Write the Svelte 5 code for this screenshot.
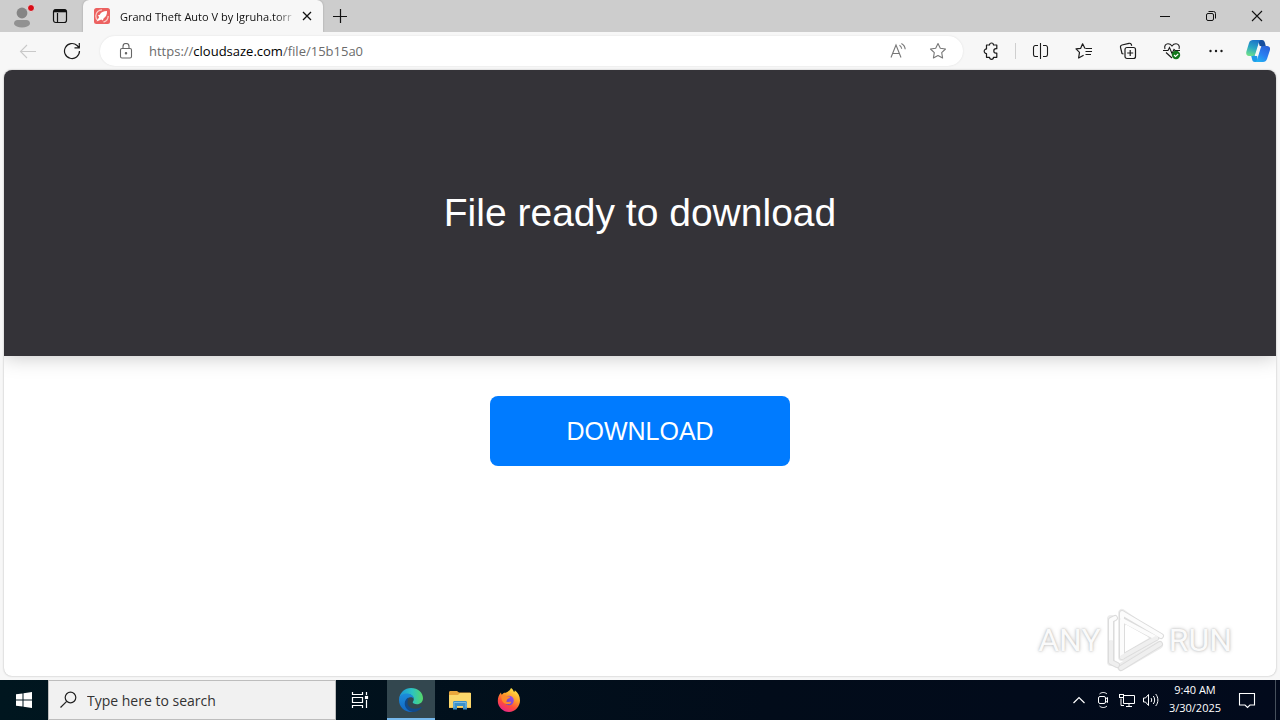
<script>
  const title = 'Grand Theft Auto V by Igruha.torr';
  let query = $state('');
</script>

<div class="screen">
  <div class="tabbar">
    <button class="corner first" aria-label="Profile">
      <svg width="30" height="28" viewBox="0 0 30 28">
        <circle cx="15" cy="11" r="5.4" fill="#858585" />
        <path d="M7 22c0-3 1.5-4 3.500-4h9c2 0 3.500 1 3.500 4-1 2-4 3.500-8 3.500s-7-1.500-8-3.500z" fill="#929292" />
        <circle cx="24" cy="6" r="3.500" fill="#d90c16" stroke="#dedede" />
      </svg>
    </button>
    <button class="corner" aria-label="Tab actions">
      <svg width="16" height="16" viewBox="0 0 16 16" fill="none" stroke="#111" stroke-width="1.200">
        <rect x="1.500" y="1.500" width="13" height="13" rx="2.200" />
        <path d="M5.500 5v9" /><path d="M2 3h12" stroke-width="2.600" />
      </svg>
    </button>
    <div class="tab">
      <svg class="fav" width="16" height="16" viewBox="0 0 16 16">
        <rect width="16" height="16" rx="2.500" fill="#ec6160" />
        <path d="M8 1.800A6.200 6.200 0 0 0 1.800 8c0 1.800.7 3.400 1.900 4.500M9.500 14A6.200 6.200 0 0 0 14.200 8" fill="none" stroke="#f9cdc9" stroke-width="1.300" />
        <path d="M13 3c-3.700 0-6 1.200-7.200 3.800l-2 .6 1.400 1.600-2.600 4.400 4.700-2 1.500 1.200.9-2.400c2.300-1.400 3.400-3.500 3.300-7.200z" fill="#fff" />
      </svg>
      <span class="title">{title}</span>
      <button class="close" aria-label="Close tab">
        <svg width="10" height="10" viewBox="0 0 10 10"><path d="M1 1l8 8M9 1l-8 8" stroke="#111" stroke-width="1.300" /></svg>
      </button>
    </div>
    <button class="plus" aria-label="New tab">
      <svg width="14" height="14" viewBox="0 0 14 14"><path d="M7.500 0v14M0 7.500h14" stroke="#111" stroke-width="1.200" /></svg>
    </button>
    <div class="spacer"></div>
    <button class="win" aria-label="Minimize">
      <svg width="10" height="10" viewBox="0 0 10 10"><path d="M0 5.500h10" stroke="#111" /></svg>
    </button>
    <button class="win" aria-label="Restore">
      <svg width="12" height="12" viewBox="0 0 12 12" fill="none" stroke="#111">
        <rect x="1.500" y="3.500" width="7" height="7" rx="1.500" /><path d="M3.500 1.500h5a2 2 0 0 1 2 2v5" />
      </svg>
    </button>
    <button class="win" aria-label="Close">
      <svg width="12" height="12" viewBox="0 0 12 12"><path d="M1 1l10 10M11 1l-10 10" stroke="#111" stroke-width="1.100" /></svg>
    </button>
  </div>

  <div class="toolbar">
    <button class="tool" aria-label="Back">
      <svg width="18" height="16" viewBox="0 0 18 16" fill="none" stroke="#c9c9c9" stroke-width="1.100"><path d="M17 8.500H2M8 2L1.500 8.500 8 15" /></svg>
    </button>
    <button class="tool" aria-label="Refresh">
      <svg width="18" height="18" viewBox="0 0 18 18" fill="none" stroke="#1b1b1b" stroke-width="1.200"><path d="M16.500 9a7.500 7.500 0 1 1-2.400-5.500L16 5.500M16.300 1v4.800h-4.800" /></svg>
    </button>
    <div class="address">
      <svg class="lock" width="14" height="16" viewBox="0 0 14 16" fill="none" stroke="#666" stroke-width="1.100">
        <rect x="1.500" y="5.500" width="11" height="9.500" rx="1.500" /><path d="M4 5.500V3.500a3 3 0 0 1 6 0v2" /><circle cx="7" cy="10.300" r=".7" fill="#666" />
      </svg>
      <a class="url" href="https://cloudsaze.com/file/15b15a0">https://<b>cloudsaze.com</b>/file/15b15a0</a>
      <button class="inner" aria-label="Read aloud">
        <svg width="18" height="18" viewBox="0 0 18 18" fill="none" stroke="#777" stroke-width="1.100">
          <path d="M2 15.500L7 3l5 12.500M3.800 11.500h6.400M10.500 3.300c1.300.8 2 2 2.200 3.500M12.400 1.500c2.300 1.200 3.600 3.200 3.800 5.800" />
        </svg>
      </button>
      <button class="inner" aria-label="Add to favorites">
        <svg width="18" height="18" viewBox="0 0 18 18" fill="none" stroke="#777" stroke-width="1.100" stroke-linejoin="round">
          <path d="M9 1.500l2.300 4.800 5.200.7-3.800 3.700.9 5.300L9 13.500 4.400 16l.9-5.300L1.500 7l5.200-.7z" />
        </svg>
      </button>
    </div>
    <button class="tool" aria-label="Extensions">
      <svg width="18" height="18" viewBox="0 0 18 18" fill="none" stroke="#1b1b1b" stroke-width="1.200" stroke-linejoin="round">
        <path d="M4.500 3h3a2 2 0 0 1 4 0h3.300v3.700h-.8a2.200 2.200 0 0 0 0 4.400h.8v4.200h-3.300a2 2 0 0 1-4 0h-3v-3.800a2.300 2.300 0 1 1 0-4.600z" />
      </svg>
    </button>
    <i class="rule"></i>
    <button class="tool" aria-label="Split screen">
      <svg width="17" height="16" viewBox="0 0 17 16" fill="none" stroke="#1b1b1b" stroke-width="1.100"><path d="M6 2.500H3a2 2 0 0 0-1.500 2v7a2 2 0 0 0 1.500 2h3M11 2.500h3a2 2 0 0 1 1.500 2v7a2 2 0 0 1-1.500 2h-3M8.500 0v16" /></svg>
    </button>
    <button class="tool" aria-label="Favorites">
      <svg width="18" height="18" viewBox="0 0 18 18" fill="none" stroke="#1b1b1b" stroke-width="1.200" stroke-linejoin="round"><path d="M10.500 6.500H17M10 6.500L7.600 1.800 5.700 6.300l-4.700.6 3.500 3.500-.9 5.600 5-2.800M10.500 9.500H17M10.500 12.500H16" /></svg>
    </button>
    <button class="tool" aria-label="Collections">
      <svg width="18" height="18" viewBox="0 0 18 18" fill="none" stroke="#1b1b1b" stroke-width="1.200"><rect x="6" y="5.500" width="10.500" height="11" rx="2" /><path d="M11.200 8v6M8.200 11h6M4.500 12L3 11.500 1.500 5.400A2 2 0 0 1 3 3l7-1.700a2 2 0 0 1 2.400 1.500l.3.900" /></svg>
    </button>
    <button class="tool" aria-label="Browser essentials">
      <svg width="18" height="18" viewBox="0 0 18 18" fill="none" stroke="#1b1b1b" stroke-width="1.100">
        <path d="M2 7C.8 3.500 3 1.800 5 1.800c1.600 0 3 .8 4 2.200 1-1.400 2.400-2.200 4-2.200 2 0 4.200 1.700 3 5.200M0 8.500h5l1.500-3 2.500 6 2-4 1 1h5M3 10.500l6 5.500" />
        <circle cx="13" cy="13" r="4.200" fill="#12771c" stroke="none" /><path d="M11 13l1.500 1.500L15.200 12" stroke="#fff" />
      </svg>
    </button>
    <button class="tool" aria-label="Settings and more">
      <svg width="16" height="16" viewBox="0 0 16 16" fill="#1b1b1b"><circle cx="2.500" cy="8" r="1.200" /><circle cx="8" cy="8" r="1.200" /><circle cx="13.500" cy="8" r="1.200" /></svg>
    </button>
    <button class="tool copilot" aria-label="Copilot">
      <svg width="24" height="24" viewBox="0 0 24 24">
        <defs>
          <linearGradient id="cpA" x1=".6" y1="0" x2=".3" y2="1"><stop offset="0" stop-color="#1b74c8" /><stop offset=".5" stop-color="#2aa7c4" /><stop offset="1" stop-color="#6ee08a" /></linearGradient>
          <linearGradient id="cpB" x1=".8" y1="0" x2=".2" y2="1"><stop offset="0" stop-color="#2a62d8" /><stop offset=".5" stop-color="#2b7df0" /><stop offset="1" stop-color="#22b4f2" /></linearGradient>
        </defs>
        <path d="M12 1h4c2 0 2.500 1.500 3 3l1 4h-6z" fill="#174f9e" />
        <path d="M12 23H9c-2 0-2.600-1.200-3-3l-1-4h6z" fill="#1e9be8" />
        <path d="M7 1h8c-1.500.5-2 2-2.600 4L9.500 14.500C9 16.300 8 17 6.500 17H3C.5 17-.2 15 .4 12.500L3 4c.8-2.200 2-3 4-3z" fill="url(#cpA)" />
        <path d="M17 23H9c1.500-.5 2-2 2.600-4l2.900-9.500C15 7.700 16 7 17.500 7H21c2.700 0 3.500 2 2.800 4.500L21 20c-.7 2-2 3-4 3z" fill="url(#cpB)" />
        <path d="M12.500 7h3.300c-1 .5-1.500 1.400-1.900 2.700L12 16c-.3.700-.7 1-1.300 1H8.300c.9-.6 1.300-1.400 1.700-2.700z" fill="#f7f7f7" />
      </svg>
    </button>
  </div>

  <main class="page">
    <header class="hero"><h1>File ready to download</h1></header>
    <button class="download">DOWNLOAD</button>
    <div class="watermark">
      <span>ANY</span>
      <svg width="60" height="64" viewBox="0 0 60 64" fill="none" stroke-linejoin="round" stroke-linecap="round">
        <g stroke="#ececec" stroke-width="8"><path d="M17 5v44l34-20zM6 11v43M16 59l38-22" /></g>
        <g stroke="#dcdcdc" stroke-width="6"><path d="M17 13v36l34-19L17 11M10 10l-4 2v42l6 3M17 10V5l39 23M16 60l39-24" /></g>
        <g stroke="#fcfcfc" stroke-width="4"><path d="M17 49V12l34 18M10 10l-4 2v20M17 10V5l39 23" /></g>
        <path d="M17 49l34-19M6 34v20l6 3M16 60l39-24" stroke="#efefef" stroke-width="4" />
        <path d="M20 17v27l24-14z" fill="#fff" stroke="none" />
      </svg>
      <span>RUN</span>
    </div>
  </main>

  <footer class="taskbar">
    <button class="app" aria-label="Start">
      <svg width="16" height="16" viewBox="0 0 16 16" fill="#fff"><path d="M0 2.300L6.500 1.400v6.100H0zM7.500 1.200L16 0v7.500H7.500zM0 8.500h6.500v6.100L0 13.700zM7.500 8.500H16V16l-8.500-1.200z" /></svg>
    </button>
    <label class="search">
      <svg width="18" height="18" viewBox="0 0 18 18" fill="none" stroke="#222" stroke-width="1.200"><circle cx="10.500" cy="6.500" r="5.300" /><path d="M6.700 10.300L.5 16.500" /></svg>
      <input type="text" placeholder="Type here to search" aria-label="Search" bind:value={query} />
    </label>
    <button class="app view" aria-label="Task view">
      <svg width="18" height="16" viewBox="0 0 18 16" fill="none" stroke="#fff" stroke-width="1.200"><path d="M1.500 0v2.500h10V0M1.500 16v-2.500h10V16M1.500 5.500h10v5h-10zM15.500 0v3M15.500 8v8" /><rect x="14.500" y="4.500" width="2" height="2" fill="#fff" /></svg>
    </button>
    <button class="app active" aria-label="Microsoft Edge">
      <svg width="24" height="24" viewBox="0 0 24 24">
        <defs>
          <linearGradient id="edA" x1="0" y1=".4" x2="1" y2=".4"><stop offset="0" stop-color="#1a93d9" /><stop offset=".55" stop-color="#2cc3c2" /><stop offset="1" stop-color="#55d868" /></linearGradient>
          <linearGradient id="edB" x1="0" y1="0" x2="0" y2="1"><stop offset="0" stop-color="#1c8ddb" /><stop offset="1" stop-color="#1267c4" /></linearGradient>
        </defs>
        <path d="M0 11C.8 4.500 5.800 0 12 0c7 0 12 4.800 12 10.200 0 3.700-2.800 6-6 6-2.600 0-4.300-.8-4.300-1.900 0-.8 1.100-1.200 1.100-3.300C14.800 8 11.500 6 8 6 4 6 1 8.500 0 11z" fill="url(#edA)" />
        <path d="M0 12c0-4 3.500-6.500 7.700-6.500 4 0 7.100 2.300 7.100 5.500-.5-1.100-1.600-1.700-3-1.700-2.300 0-4.300 2-4.300 5.200 0 4.300 3.500 7.800 8 8.600-1.100.6-2.300.9-3.500.9C5.300 24 0 18.800 0 12z" fill="url(#edB)" />
        <path d="M9 12c-2 5 2 8.800 7 8.800 2.400 0 4.400-.8 5.800-1.700.6-.3.900.1.600.6C20.500 22.300 17.500 24 14 23.900c-5-.5-8.300-4.400-8.300-8.400 0-3 1.700-5.300 4.200-6.300-.8.700-1 1.700-.9 2.800z" fill="#114a8b" />
      </svg>
    </button>
    <button class="app" aria-label="File Explorer">
      <svg width="22" height="20" viewBox="0 0 22 20">
        <path d="M0 2.500C0 1.700.5 1 1.500 1H8l2 1.500h10.500c1 0 1.500.5 1.500 1.500V18H0z" fill="#e9a63c" /><path d="M0 5h9l2-2h11v14.500H0z" fill="#fbd76b" />
        <path d="M4 19.500v-7c0-1 .7-1.500 1.500-1.500h11c.8 0 1.500.5 1.500 1.500v7h-4V16H8v3.500z" fill="#3c91c9" /><path d="M5 17.500v-5h12v5" fill="none" stroke="#7dbbe0" />
      </svg>
    </button>
    <button class="app gap" aria-label="Firefox">
      <svg width="24" height="24" viewBox="0 0 24 24">
        <defs>
          <linearGradient id="ffA" x1=".8" y1="0" x2=".3" y2="1"><stop offset="0" stop-color="#fff04a" /><stop offset=".4" stop-color="#ff9f2a" /><stop offset=".7" stop-color="#ff4b3c" /><stop offset="1" stop-color="#e8248b" /></linearGradient>
          <linearGradient id="ffB" x1="1" y1="0" x2="0" y2="1"><stop offset="0" stop-color="#a34ee8" /><stop offset="1" stop-color="#5a46c4" /></linearGradient>
        </defs>
        <path d="M14 0c1.500 1 2.500 2.500 3 4 .6-.3.800-1 .8-1.700C21 4.500 23 8 23 12.500 23 18.500 18 24 12 24S.800 19 .8 13C.8 9.500 2 6.500 4 4.500c0 1 .3 1.700.8 2.300 1-1.700 2.500-2.300 4-2.100C10 4.500 12.500 3 14 0z" fill="url(#ffA)" />
        <circle cx="12" cy="12.500" r="4.800" fill="url(#ffB)" />
        <path d="M4.500 8c2-1.200 4-.8 5.600.2 1.500 0 2.900.2 2.900 1.100 0 1-1.800 1.300-2.700 1.900-.5.400 0 1.400-1.300 2.100 1.500 1.500 4 .2 5.300.6-.7 2.300-4 3.300-7 1.400C5 13.800 4 11 4.500 8z" fill="#ff8b2a" />
      </svg>
    </button>
    <div class="spacer"></div>
    <button class="tray" aria-label="Show hidden icons">
      <svg width="12" height="8" viewBox="0 0 12 8"><path d="M.5 7L6 1.500 11.500 7" fill="none" stroke="#fff" stroke-width="1.200" /></svg>
    </button>
    <button class="tray" aria-label="Meet Now">
      <svg width="14" height="18" viewBox="0 0 14 18" fill="none" stroke="#fff"><rect x="2.500" y="5.500" width="7" height="7" rx="1.500" /><path d="M9.500 8l2-1.500v5l-2-1.500M3.500 3c2-2 5.500-2 7.500 0M3.500 15c2 2 5.500 2 7.500 0" /></svg>
    </button>
    <button class="tray" aria-label="Network">
      <svg width="18" height="14" viewBox="0 0 18 14" fill="none" stroke="#fff"><path d="M5.500 2.500h11v8h-11zM8 13.500h6M11 10.500v3M3 5.500v7h3" /><rect x="1.500" y="1.500" width="4" height="3" fill="#020c1a" /></svg>
    </button>
    <button class="tray" aria-label="Volume">
      <svg width="18" height="14" viewBox="0 0 18 14" fill="none" stroke="#fff"><path d="M1.500 5h2l3-3.500v11L3.500 9h-2zM9 5c.9 1.200.9 2.800 0 4M11.300 3c1.800 2.300 1.800 5.700 0 8M13.700 1c2.900 3.500 2.900 8.500 0 12" /></svg>
    </button>
    <div class="clock"><span>9:40 AM</span><span>3/30/2025</span></div>
    <button class="tray note" aria-label="Notifications">
      <svg width="18" height="18" viewBox="0 0 18 18"><path d="M1.500 2.500h15v11.500H12L9.500 16.500 7 14H1.500z" fill="none" stroke="#fff" stroke-width="1.100" /></svg>
    </button>
    <i class="desk"></i>
  </footer>
</div>

<style>
  :global(body) { margin: 0; }
  .screen { display: flex; flex-direction: column; min-height: 100vh; background: #f7f7f7; font-family: "Open Sans", "Noto Sans", sans-serif; font-size: 11px; color: #111; }
  button { display: flex; align-items: center; justify-content: center; flex: none; padding: 0; border: 0; background: none; font: inherit; color: inherit; }
  svg { display: block; flex: none; }
  .spacer { flex: 1; }

  .tabbar { display: flex; height: 32px; background: #cdcdcd; }
  .corner { width: 38px; }
  .first { margin-left: 3px; }
  .tab { display: flex; align-items: center; width: 240px; margin-left: 4px; box-sizing: border-box; padding: 0 10px 0 11px; background: #f7f7f7; border-radius: 6px 6px 0 0; box-shadow: 0 0 2px #999; clip-path: inset(0 -3px); }
  .title { flex: 1; min-width: 0; margin-left: 10px; overflow: hidden; white-space: nowrap; mask-image: linear-gradient(to right, #000 88%, transparent); }
  .close { width: 12px; margin-left: 4px; }
  .plus { width: 34px; }
  .win { width: 46px; }

  .toolbar { display: flex; align-items: center; height: 38px; padding: 0 2px 0 6px; }
  .tool { width: 44px; height: 32px; }
  .copilot { width: 40px; }
  .rule { width: 1px; height: 16px; margin: 0 2px; background: #cfcfcf; }
  .address { display: flex; align-items: center; flex: 1; min-width: 0; height: 30px; margin: 0 6px; padding: 0 5px 0 19px; box-sizing: border-box; border-radius: 15px; background: #fff; box-shadow: 0 0 2px #ddd; }
  .url { flex: 1; min-width: 0; margin-left: 16px; overflow: hidden; white-space: nowrap; font-size: 13px; color: #6b6b6b; text-decoration: none; }
  .url b { font-weight: 400; color: #000; }
  .inner { width: 40px; height: 28px; }

  .page { position: relative; display: flex; flex-direction: column; align-items: center; flex: 1; margin: 0 4px 4px; border-radius: 8px; overflow: hidden; background: #fff; box-shadow: 0 0 2px #aaa; }
  .hero { display: flex; align-items: center; justify-content: center; align-self: stretch; height: 286px; background: #343338; box-shadow: 0 0 20px rgba(0, 0, 0, .25); }
  h1 { margin: 0; font: 400 39px "Liberation Sans", Arial, sans-serif; color: #fff; }
  .download { width: 300px; height: 70px; margin-top: 40px; border-radius: 8px; background: #007bff; color: #fff; font: 400 25px "Liberation Sans", Arial, sans-serif; }
  .watermark { position: absolute; right: 44px; bottom: 4px; display: flex; align-items: center; gap: 4px; font: 400 32px Roboto, "Liberation Sans", sans-serif; color: #fafafa; text-shadow: 0 0 2px #bbb, 0 0 4px #ccc; }

  .taskbar { display: flex; height: 40px; background: linear-gradient(to right, #00161f, #020c1a 60%, #020a1c); color: #fff; }
  .app { width: 48px; }
  .search { display: flex; align-items: center; width: 288px; box-sizing: border-box; padding: 0 11px; border: 1px solid #bdbdbd; background: #f1f1f1; }
  .search input { flex: 1; min-width: 0; margin-left: 9px; padding: 0; border: 0; outline: 0; background: none; font: 14px "Open Sans", "Noto Sans", sans-serif; color: #222; }
  .search input::placeholder { color: #333; opacity: 1; }
  .view { margin-right: 3px; }
  .active { margin-right: 1px; background: #33474f; box-shadow: inset 0 -2px #76b9ed; }
  .gap { margin-left: 1px; }
  .tray { width: 24px; }
  .clock { display: flex; flex-direction: column; align-items: center; justify-content: center; width: 64px; line-height: 18px; padding-bottom: 2px; box-sizing: border-box; }
  .note { width: 40px; }
  .desk { width: 1px; margin: 0 4px 0 8px; background: #46505c; }
</style>
